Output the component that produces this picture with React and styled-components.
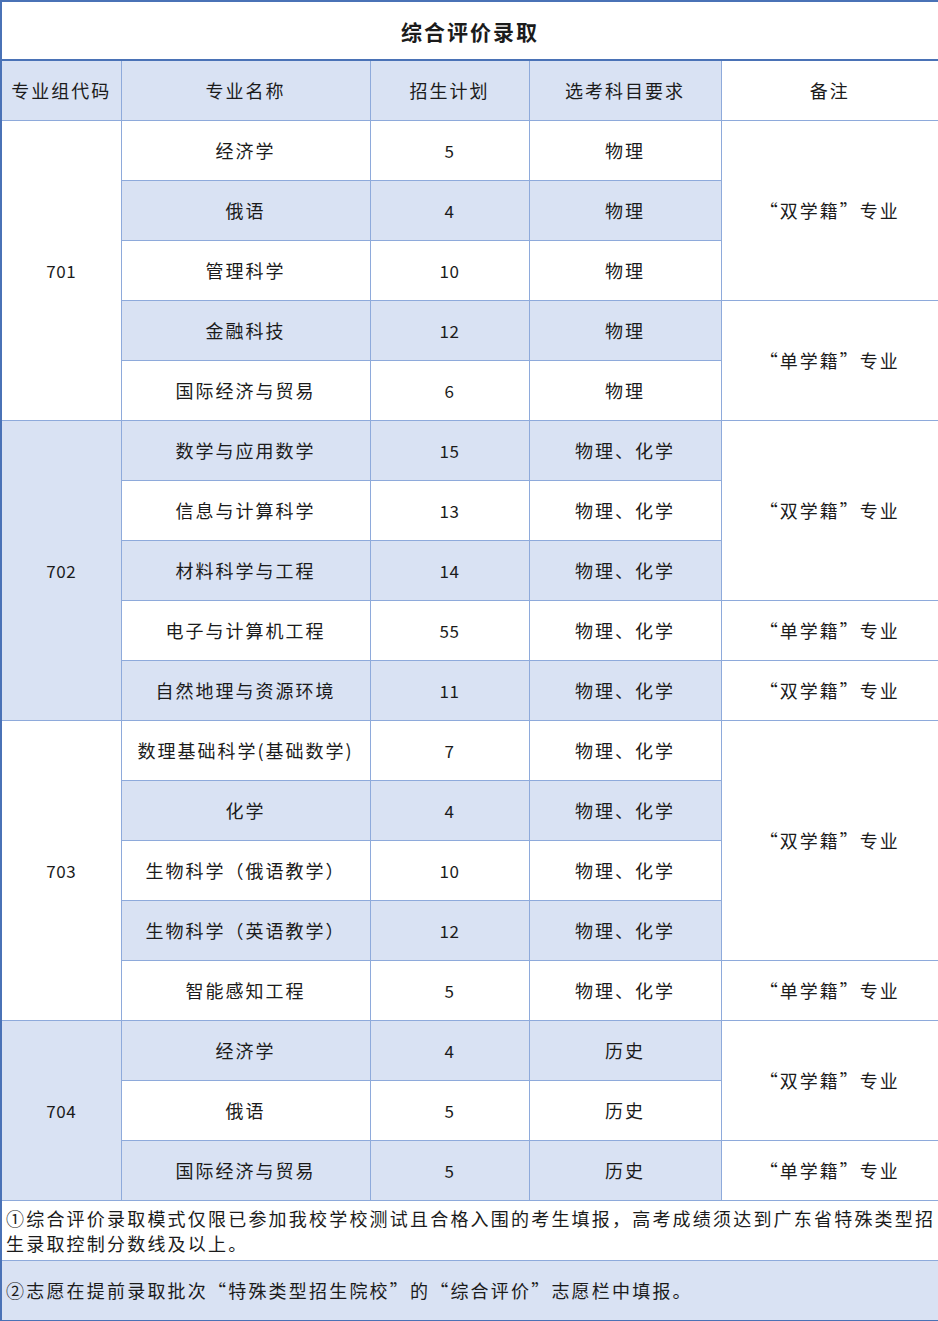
import styled, { createGlobalStyle } from 'styled-components';

const GlobalStyle = createGlobalStyle`
  html, body {
    margin: 0;
    padding: 0;
    background: #ffffff;
  }
  body {
    font-family: "Noto Sans CJK SC", "Noto Sans", sans-serif;
    color: #1b1b1b;
  }
`;

const FILL = '#d9e2f3';
const LINE = '#8eaadb';
const EDGE = '#4a72b6';

// 数据：每组的专业
const groups = [
  {
    code: '701',
    rows: [
      ['经济学', '5', '物理'],
      ['俄语', '4', '物理'],
      ['管理科学', '10', '物理'],
      ['金融科技', '12', '物理'],
      ['国际经济与贸易', '6', '物理'],
    ],
    notes: [
      ['“双学籍”专业', 3],
      ['“单学籍”专业', 2],
    ],
  },
  {
    code: '702',
    rows: [
      ['数学与应用数学', '15', '物理、化学'],
      ['信息与计算科学', '13', '物理、化学'],
      ['材料科学与工程', '14', '物理、化学'],
      ['电子与计算机工程', '55', '物理、化学'],
      ['自然地理与资源环境', '11', '物理、化学'],
    ],
    notes: [
      ['“双学籍”专业', 3],
      ['“单学籍”专业', 1],
      ['“双学籍”专业', 1],
    ],
  },
  {
    code: '703',
    rows: [
      ['数理基础科学(基础数学)', '7', '物理、化学'],
      ['化学', '4', '物理、化学'],
      ['生物科学（俄语教学）', '10', '物理、化学'],
      ['生物科学（英语教学）', '12', '物理、化学'],
      ['智能感知工程', '5', '物理、化学'],
    ],
    notes: [
      ['“双学籍”专业', 4],
      ['“单学籍”专业', 1],
    ],
  },
  {
    code: '704',
    rows: [
      ['经济学', '4', '历史'],
      ['俄语', '5', '历史'],
      ['国际经济与贸易', '5', '历史'],
    ],
    notes: [
      ['“双学籍”专业', 2],
      ['“单学籍”专业', 1],
    ],
  },
];

const Table = styled.table`
  width: 938px;
  border-collapse: collapse;
  table-layout: fixed;
  border: 2px solid ${EDGE};
`;

const Row = styled.tr``;

const Cell = styled.td`
  height: 59px;
  padding: 0;
  border: 1px solid ${LINE};
  background: ${(p) => (p.$fill ? FILL : '#ffffff')};
  text-align: center;
  vertical-align: middle;
  font-size: 18px;
  letter-spacing: 2px;
  line-height: 25px;
  white-space: nowrap;
`;

const NumCell = styled(Cell)`
  letter-spacing: 0.5px;
  font-size: 17px;
`;

const TitleCell = styled.th`
  height: 57px;
  padding: 0;
  border-bottom: 2px solid ${EDGE};
  background: #ffffff;
  font-size: 21px;
  font-weight: 700;
  letter-spacing: 2px;
  text-align: center;
`;

const NoteCell = styled(Cell)`
  text-align: left;
  white-space: normal;
  padding: 0 2px 0 4px;
  letter-spacing: 2.2px;
`;

const App = () => {
  let rowIndex = 0;

  return (
    <>
      <GlobalStyle />
      <Table>
        <colgroup>
          <col style={{ width: 120 }} />
          <col style={{ width: 249 }} />
          <col style={{ width: 159 }} />
          <col style={{ width: 192 }} />
          <col style={{ width: 218 }} />
        </colgroup>
        <thead>
          <Row>
            <TitleCell colSpan={5}>综合评价录取</TitleCell>
          </Row>
        </thead>
        <tbody>
          <Row>
            <Cell $fill>专业组代码</Cell>
            <Cell $fill>专业名称</Cell>
            <Cell $fill>招生计划</Cell>
            <Cell $fill>选考科目要求</Cell>
            <Cell>备注</Cell>
          </Row>

          {groups.map((group, gi) => {
            // 备注列起始行
            const noteStarts = {};
            let at = 0;
            group.notes.forEach(([text, span]) => {
              noteStarts[at] = { text, span };
              at += span;
            });

            return group.rows.map(([name, plan, subject], ri) => {
              const shaded = rowIndex % 2 === 1;
              rowIndex += 1;
              const note = noteStarts[ri];
              return (
                <Row key={`${group.code}-${ri}`}>
                  {ri === 0 && (
                    <NumCell rowSpan={group.rows.length} $fill={gi % 2 === 1}>
                      {group.code}
                    </NumCell>
                  )}
                  <Cell $fill={shaded}>{name}</Cell>
                  <NumCell $fill={shaded}>{plan}</NumCell>
                  <Cell $fill={shaded}>{subject}</Cell>
                  {note && <Cell rowSpan={note.span}>{note.text}</Cell>}
                </Row>
              );
            });
          })}

          <Row>
            <NoteCell colSpan={5}>
              ①综合评价录取模式仅限已参加我校学校测试且合格入围的考生填报，高考成绩须达到广东省特殊类型招生录取控制分数线及以上。
            </NoteCell>
          </Row>
          <Row>
            <NoteCell colSpan={5} $fill>
              ②志愿在提前录取批次“特殊类型招生院校”的“综合评价”志愿栏中填报。
            </NoteCell>
          </Row>
        </tbody>
      </Table>
    </>
  );
};

export default App;
